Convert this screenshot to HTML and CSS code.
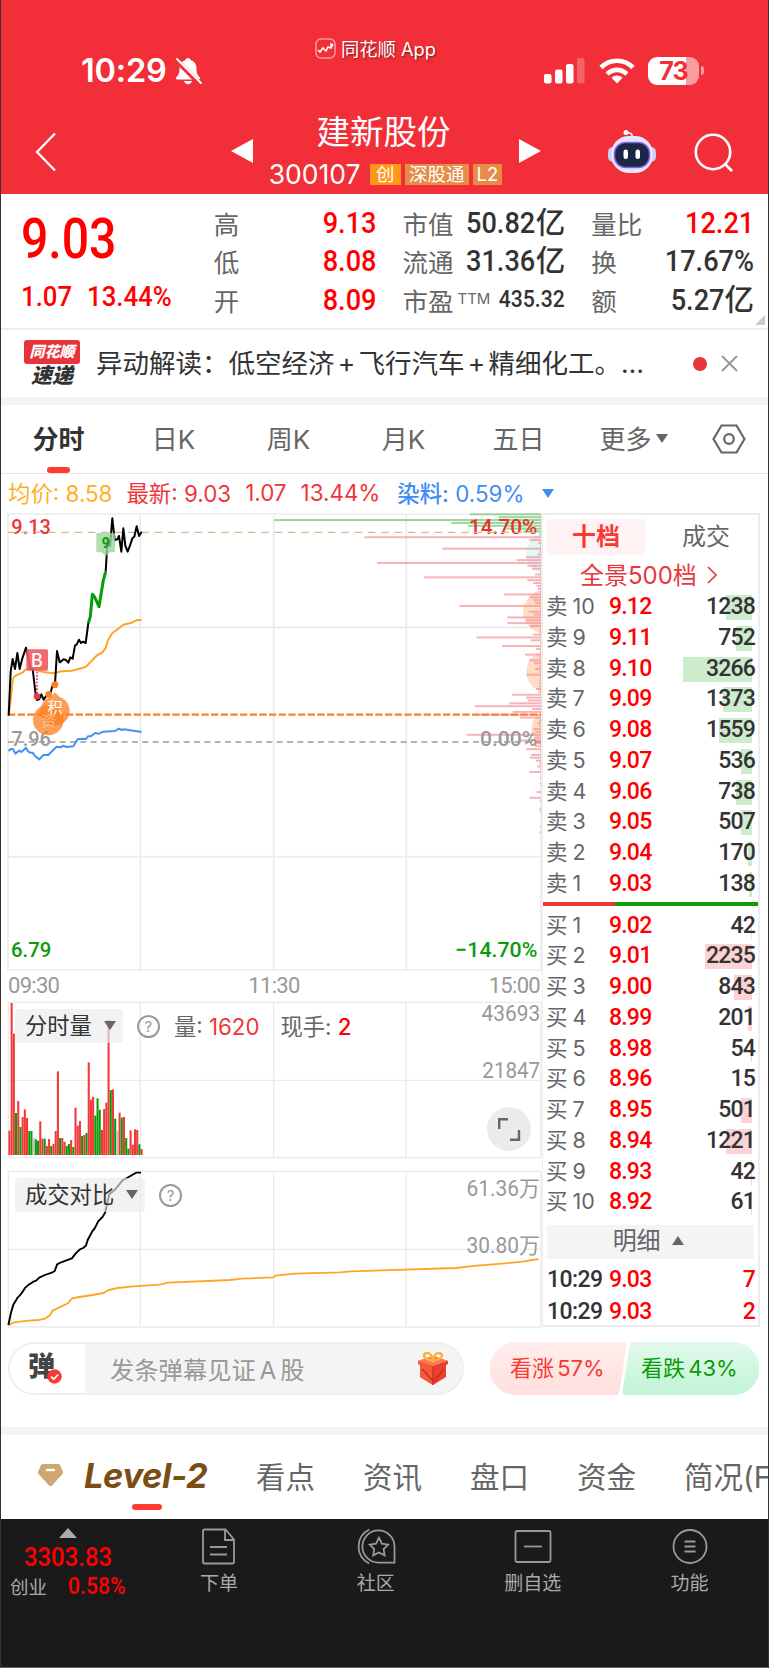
FILE: index.html
```html
<!DOCTYPE html>
<html lang="zh-CN">
<head>
  <meta charset="UTF-8">
  <meta name="viewport" content="width=device-width, initial-scale=1.0">
  <title>建新股份 300107</title>
  <link rel="stylesheet" href="styles.css">
</head>
<body>
<div class="phone">

  <!-- 顶部 -->
  <header class="header">
    <div class="status">
      <span class="clock">10:29</span>
      <svg class="bell" width="27" height="28" viewBox="0 0 27 28">
        <path fill="#fff" d="M13 1c1.500 0 2.500 1 2.800 2.300C20 4.500 21.500 8 21.500 12c0 5 1.500 6.500 3 8 1 1.200.5 2.500-1 2.500h-21c-1.500 0-2-1.300-1-2.500 1.500-1.500 3-3 3-8 0-4 1.500-7.500 5.700-8.700C10.500 2 11.500 1 13 1zM9 24h8c-.5 2-2 3.200-4 3.200S9.500 26 9 24z"/>
        <path d="M1 3l24 24" stroke="#f22f38" stroke-width="5"/>
        <path d="M2 2l24 24" stroke="#fff" stroke-width="2" stroke-linecap="round"/>
      </svg>
      <div class="status-right">
        <svg width="41" height="26" viewBox="0 0 41 26" fill="#fff">
          <rect x="0" y="16" width="7.500" height="9.500" rx="2"/>
          <rect x="11" y="11.500" width="7.500" height="14" rx="2"/>
          <rect x="22" y="6" width="7.500" height="19.500" rx="2"/>
          <rect x="33" y="0" width="7.500" height="25.500" rx="2" opacity=".25"/>
        </svg>
        <svg class="wifi" width="36" height="26" viewBox="0 0 36 26" fill="none" stroke="#fff" stroke-width="4.600">
          <path d="M2 9.500C11 .5 25 .5 34 9.500"/>
          <path d="M8 16c6-5.500 14-5.500 20 0"/>
          <path d="M12.500 19.800c3.500-3 7.500-3 11 0L18 25.500z" fill="#fff" stroke="none"/>
        </svg>
        <div class="battery">73</div>
        <i class="battery-tip"></i>
      </div>
      <div class="app-name">
        <svg width="21" height="21" viewBox="0 0 21 21" fill="none" stroke="#fff">
          <rect x="1" y="1" width="19" height="19" rx="5" stroke="#ff9a9a" stroke-width="1.500"/>
          <path d="M3 12l2 2 3-4 3 3 2-4 3 1 2-4M16 5v5" stroke-width="1.600"/>
        </svg>
        <span>同花顺 App</span>
      </div>
    </div>
    <div class="nav">
      <svg class="back" width="22" height="40" viewBox="0 0 22 40"><path d="M20 1.500L2 20l18 18.500" fill="none" stroke="#fff" stroke-width="2.300"/></svg>
      <i class="prev"></i>
      <div class="stock">
        <h1>建新股份</h1>
        <div class="code">300107 <b class="hot">创</b><b>深股通</b><b>L2</b></div>
      </div>
      <i class="next"></i>
      <svg class="robot" width="48" height="43" viewBox="0 0 48 43">
        <path d="M24 8c1-4-1-5-5-5.500" fill="none" stroke="#e6e3ff" stroke-width="2"/>
        <circle cx="18" cy="2.500" r="2.500" fill="#fff"/>
        <rect x="0" y="17" width="10" height="15" rx="5" fill="#c9cbf5"/>
        <rect x="38" y="17" width="10" height="15" rx="5" fill="#c9cbf5"/>
        <rect x="3" y="6" width="42" height="37" rx="18" fill="#e4e7fb"/>
        <rect x="6.500" y="12.500" width="35" height="25" rx="11" fill="#1c2746" stroke="#8660ea" stroke-width="1.500"/>
        <rect x="15.500" y="19.500" width="4.500" height="9.500" rx="2.200" fill="#fff"/>
        <rect x="27.500" y="19.500" width="4.500" height="9.500" rx="2.200" fill="#fff"/>
      </svg>
      <svg class="search" width="40" height="40" viewBox="0 0 40 40" fill="none" stroke="#fff" stroke-width="2.600"><circle cx="19" cy="19" r="17.200"/><path d="M31 31l7 7"/></svg>
    </div>
  </header>

  <!-- 报价 -->
  <section class="quote">
    <div class="last">
      <div class="price din">9.03</div>
      <div class="change"><span class="din">1.07</span><span class="din">13.44%</span></div>
    </div>
    <dl>
      <dt>高</dt><dd class="red"><span class="din">9.13</span></dd>
      <dt>低</dt><dd class="red"><span class="din">8.08</span></dd>
      <dt>开</dt><dd class="red"><span class="din">8.09</span></dd>
    </dl>
    <dl>
      <dt>市值</dt><dd><span class="din">50.82</span>亿</dd>
      <dt>流通</dt><dd><span class="din">31.36</span>亿</dd>
      <dt>市盈<sup>TTM</sup></dt><dd class="small"><span class="din">435.32</span></dd>
    </dl>
    <dl>
      <dt>量比</dt><dd class="red"><span class="din">12.21</span></dd>
      <dt>换</dt><dd><span class="din">17.67%</span></dd>
      <dt>额</dt><dd><span class="din">5.27</span>亿</dd>
    </dl>
    <i class="corner"></i>
  </section>

  <!-- 快讯 -->
  <section class="news">
    <div class="news-logo"><b>同花顺</b><span>速递</span></div>
    <p>异动解读：低空经济<em>+</em>飞行汽车<em>+</em>精细化工。…</p>
    <i class="dot"></i>
    <svg width="17" height="17" viewBox="0 0 17 17" stroke="#999" stroke-width="2"><path d="M1 1l15 15M16 1L1 16"/></svg>
  </section>

  <nav class="periods">
    <span class="active">分时</span>
    <span>日K</span>
    <span>周K</span>
    <span>月K</span>
    <span>五日</span>
    <span>更多<i class="down"></i></span>
    <svg width="34" height="30" viewBox="0 0 34 30" fill="none" stroke="#666" stroke-width="2.200"><path d="M9.500 1.500h15L32.500 15l-8 13.500h-15L1.500 15z"/><circle cx="17" cy="15" r="4.800"/></svg>
  </nav>

  <div class="legend">
    <span class="avg">均价: 8.58</span>
    <span class="now">最新: 9.03</span>
    <span class="now">1.07</span>
    <span class="now">13.44%</span>
    <span class="dye"><b>染料:</b> 0.59%</span>
    <i class="down"></i>
  </div>

  <main class="market">
    <div class="charts">
      <!-- 分时走势 -->
      <svg class="trend" width="536" height="458" viewBox="21 24 1608 1374">
        <g stroke="#ebebeb" stroke-width="5" fill="none">
          <path d="M24 27H1623V1395H24z"/>
          <path d="M24 367H1623M24 1055H1623M421 27V1395M821 27V1395M1219 27V1395"/>
        </g>
        <g opacity=".55">
          <path d="M1623 87a60 60 0 0 0 0 116z" fill="#c9f1f6"/>
          <path d="M1623 256a65 65 0 0 0 0 128z" fill="#ffc496"/>
          <path d="M1623 440a63 63 0 0 0 0 120z" fill="#ffc496"/>
          <path d="M1623 623a56 56 0 0 0 0 98z" fill="#ffc496"/>
        </g>
        <g id="chips"></g>
        <g font-family="Roboto" font-weight="500" font-size="63">
          <text x="34" y="88" fill="#f0323a" textLength="119" lengthAdjust="spacingAndGlyphs">9.13</text>
          <text x="1407" y="88" fill="#e8322c" textLength="205" lengthAdjust="spacingAndGlyphs">14.70%</text>
          <text x="34" y="722" fill="#999" textLength="119" lengthAdjust="spacingAndGlyphs">7.96</text>
          <text x="1440" y="722" fill="#999" textLength="172" lengthAdjust="spacingAndGlyphs">0.00%</text>
          <text x="33" y="1355" fill="#0a9b0a" textLength="121" lengthAdjust="spacingAndGlyphs">6.79</text>
          <text x="1366" y="1355" fill="#0a9b0a" textLength="246" lengthAdjust="spacingAndGlyphs">−14.70%</text>
        </g>
        <path d="M24 82H1623" stroke="#dcb98a" stroke-width="4" stroke-dasharray="22 18"/>
        <path d="M24 711H1623" stroke="#9a9a9a" stroke-width="5" stroke-dasharray="18 13"/>
        <path d="M24 629H1623" stroke="#f5842a" stroke-width="7" stroke-dasharray="22 7"/>
        <g fill="none" stroke-width="6" stroke-linejoin="round">
          <polyline stroke="#ffa526" points="26,632 35,560 38,522 45,513 67,503 78,493 105,494 130,501 160,505 185,499 215,497 257,486 292,450 305,444 317,430 324,405 337,384 350,375 370,359 395,353 412,345 425,345"/>
          <polyline stroke="#4490f5" points="26,738 32,732 39,732 46,746 58,737 64,741 71,735 78,728 84,739 91,743 98,743 105,753 118,763 130,750 145,750 170,725 183,727 190,722 200,726 220,724 233,703 245,701 258,702 264,694 272,694 285,684 297,686 310,680 345,678 357,671 365,675 372,673 400,677 425,681"/>
          <polyline stroke="#000" points="26,632 32,500 38,462 45,492 52,444 59,492 67,460 78,428 92,492 98,492 106,560 111,585 118,582 124,568 131,584 138,574 146,566 152,562 158,540 165,538 171,438 179,472 191,463 198,465 205,473 211,457 218,461 225,421 230,419 237,404 243,414 249,410 257,414 265,354"/>
          <polyline stroke="#000" points="317,200 323,100 330,123 337,40 344,105 352,103 357,93 364,140 370,70 376,122 383,140 390,122 397,100 403,95 410,64 417,93 425,80"/>
          <polyline stroke="#0a9b0a" stroke-width="9" points="265,354 271,335 277,268 284,276 297,305 310,226 317,200"/>
        </g>
        <!-- 买卖标记 -->
        <path d="M111 500V570" stroke="#e8384a" stroke-width="5" stroke-dasharray="5 5"/>
        <rect x="79" y="433" width="65" height="64" rx="5" fill="#ef5a62" opacity=".9"/>
        <text x="111" y="486" font-family="Inter" font-weight="500" font-size="54" fill="#fff" text-anchor="middle">B</text>
        <circle cx="111" cy="574" r="10" fill="#e8384a"/>
        <path d="M293 84h48q4 0 4 4v50q0 4-4 4h-12l-12 12-12-12h-12q-4 0-4-4V88q0-4 4-4z" fill="#9ad79a" opacity=".8"/>
        <text x="317" y="129" font-family="Roboto" font-weight="700" font-size="42" fill="#0a9b0a" text-anchor="middle">9</text>
        <g fill="#ff7f1e">
          <circle cx="165" cy="539" r="10"/>
          <circle cx="146" cy="568" r="10"/>
          <circle cx="145" cy="645" r="46" opacity=".75"/>
          <path d="M165 562l14 14a44 44 0 1 1-28 0z" opacity=".75"/>
        </g>
        <g font-family="Noto Sans CJK SC" font-size="46" fill="#fff" text-anchor="middle">
          <text x="145" y="662" opacity=".4">资</text>
          <text x="165" y="625">积</text>
        </g>
      </svg>

      <div class="times"><span>09:30</span><span>11:30</span><span>15:00</span></div>

      <!-- 分时量 -->
      <div class="sub">
        <svg width="536" height="158" viewBox="20 213 1528 474" preserveAspectRatio="none">
          <path d="M24 217H1542V683H24zM24 451H1542M400 217V683M780 217V683M1158 217V683" fill="none" stroke="#ebebeb" stroke-width="4"/>
          <g id="volume"></g>
          <g font-family="Roboto" font-size="64" fill="#999">
            <text x="1373" y="272" textLength="167" lengthAdjust="spacingAndGlyphs">43693</text>
            <text x="1375" y="444" textLength="165" lengthAdjust="spacingAndGlyphs">21847</text>
          </g>
        </svg>
        <div class="sub-head">
          <span class="select">分时量<i class="down"></i></span>
          <span class="help">?</span>
          <span class="info">量: <b>1620</b></span>
          <span class="info">现手: <b class="strong">2</b></span>
        </div>
        <div class="expand">
          <svg width="22" height="23" viewBox="0 0 22 23" fill="none" stroke="#666" stroke-width="2.400"><path d="M1.200 11V1.200H10M21 12v9.800h-9"/></svg>
        </div>
      </div>

      <!-- 成交对比 -->
      <div class="sub compare">
        <svg width="536" height="158" viewBox="20 58 1528 474" preserveAspectRatio="none">
          <path d="M24 62H1542V529H24zM24 296H1542M400 62V529M780 62V529M1158 62V529" fill="none" stroke="#ebebeb" stroke-width="4"/>
          <g fill="none" stroke-width="5.500" stroke-linejoin="round">
            <polyline stroke="#ffa526" points="24,523 40,515 80,510 110,508 128,504 143,493 150,480 170,470 195,457 204,444 225,439 265,433 295,427 310,418 335,412 380,407 455,402 480,396 655,388 690,384 780,380 785,375 840,369 970,365 1000,362 1300,352 1360,345 1440,338 1490,333 1535,325"/>
            <polyline stroke="#000" points="24,523 31,488 38,462 44,452 50,441 56,435 62,427 72,411 83,401 90,397 95,393 103,390 112,381 128,373 150,365 156,361 163,341 170,337 180,333 205,323 216,308 228,296 237,292 245,285 250,268 263,242 270,233 280,212 293,198 300,185 305,160 312,130 325,120 335,108 350,88 362,82 388,66 402,66"/>
          </g>
          <g font-family="Roboto, 'Noto Sans CJK SC'" font-size="64" fill="#999">
            <text x="1330" y="135" textLength="209" lengthAdjust="spacingAndGlyphs">61.36万</text>
            <text x="1330" y="308" textLength="209" lengthAdjust="spacingAndGlyphs">30.80万</text>
          </g>
        </svg>
        <div class="sub-head">
          <span class="select">成交对比<i class="down"></i></span>
          <span class="help">?</span>
        </div>
      </div>
    </div>

    <!-- 盘口 -->
    <aside class="book">
      <div class="book-tabs"><span class="active">十档</span><span>成交</span></div>
      <div class="all">全景500档 <svg width="10" height="18" viewBox="0 0 10 18"><path d="M1 1l8 8-8 8" fill="none" stroke="#e8383c" stroke-width="1.600"/></svg></div>
      <div id="sell"></div>
      <div class="ratio"></div>
      <div id="buy"></div>
      <div class="detail">明细 <i class="up"></i></div>
      <div class="trade"><span>10:29</span><b>9.03</b><b class="num">7</b></div>
      <div class="trade"><span>10:29</span><b>9.03</b><b class="num">2</b></div>
    </aside>
  </main>

  <!-- 弹幕 -->
  <section class="danmu">
    <div class="input">
      <div class="toggle">弹<svg width="15" height="15" viewBox="0 0 15 15"><circle cx="7.500" cy="7.500" r="7.200" fill="#fa3932"/><path d="M4 7.500l2.700 2.700 4.500-4.700" fill="none" stroke="#fff" stroke-width="1.700"/></svg></div>
      <div class="hint">发条弹幕见证 A 股</div>
      <svg class="gift" width="32" height="33" viewBox="0 0 32 33">
        <path d="M1 9l15-5 15 5v3l-2 1v12l-13 8-13-8V13l-2-1z" fill="#e8402c"/>
        <path d="M1 9l15 5v19L3 25V13l-2-1z" fill="#f25b3d"/>
        <path d="M1 9l15-5 15 5-15 5z" fill="#fa7a58"/>
        <path d="M5 17l11 12M16 15v18M27 17L17 29" stroke="#c92a1c" stroke-width="1.200"/>
        <path d="M16 9c-3-1-9-2-9-5s4-4 6-2 3 5 3 7zm0 0c3-1 9-2 9-5s-4-4-6-2-3 5-3 7z" fill="none" stroke="#f6b13a" stroke-width="2.400"/>
      </svg>
    </div>
    <div class="vote">
      <svg width="269" height="53" viewBox="0 0 269 53">
        <defs>
          <linearGradient id="up" x2="0" y2="1"><stop stop-color="#ffeeed"/><stop offset="1" stop-color="#ffdfdd"/></linearGradient>
          <linearGradient id="dn" x2="0" y2="1"><stop stop-color="#e2faec"/><stop offset="1" stop-color="#c0f3d5"/></linearGradient>
        </defs>
        <path d="M26 0h107q4 0 3.500 4l-7 45q-.5 4-4.500 4H26a26 26 0 0 1 0-53z" fill="url(#up)"/>
        <path d="M144 0h99a26 26 0 0 1 0 53H136q-4 0-3.500-4l7-45q.5-4 4.500-4z" fill="url(#dn)"/>
      </svg>
      <div class="vote-text"><span>看涨 57%</span><span class="fall">看跌 43%</span></div>
    </div>
  </section>

  <nav class="tabs">
    <svg width="27" height="24" viewBox="0 0 27 24"><path d="M6 1h15q1 0 2 1l3 7q.5 1-.5 2L15 22.500q-1.500 1.500-3 0L1.500 11Q.5 10 1 9l3-7q1-1 2-1z" fill="#cfa671"/><path d="M9 7h9" stroke="#fff" stroke-width="2.400"/></svg>
    <span class="level">Level-2</span>
    <span>看点</span><span>资讯</span><span>盘口</span><span>资金</span><span>简况(F10)</span>
  </nav>

  <footer class="bottom">
    <div class="index">
      <i class="up"></i>
      <div class="point din">3303.83</div>
      <div class="index-row">创业<span class="din">0.58%</span></div>
    </div>
    <div class="item">
      <svg width="36" height="36" viewBox="0 0 36 36"><path d="M3.500 1h21l8.500 10v22.500q0 1.500-1.500 1.500h-28Q2 35 2 33.500v-31Q2 1 3.500 1zM24 1v10.500h9M9 18.500h17M9 26h17"/></svg>
      下单
    </div>
    <div class="item">
      <svg width="40" height="38" viewBox="0 0 40 38"><path d="M39 35.500H23a16.500 16.500 0 1 1 16-16.500zM13 1.500C-1.500 9 -1.500 29 13 36.500"/><path d="M23 10l3 6 6.500 1-4.700 4.600 1.100 6.500-5.900-3-5.900 3 1.100-6.500-4.700-4.600 6.500-1z"/></svg>
      社区
    </div>
    <div class="item">
      <svg width="38" height="36" viewBox="0 0 38 36"><rect x="1.500" y="2.500" width="35" height="31" rx="1.500"/><path d="M10 18h18"/></svg>
      删自选
    </div>
    <div class="item">
      <svg width="36" height="36" viewBox="0 0 36 36"><circle cx="18" cy="18" r="16.500"/><path d="M12.500 13h11M12.500 18h11M12.500 23h11"/></svg>
      功能
    </div>
  </footer>
</div>

<script>
  // 十档盘口 [价格, 数量]
  const sells = [['9.12', 1238], ['9.11', 752], ['9.10', 3266], ['9.09', 1373], ['9.08', 1559], ['9.07', 536], ['9.06', 738], ['9.05', 507], ['9.04', 170], ['9.03', 138]];
  const buys = [['9.02', 42], ['9.01', 2235], ['9.00', 843], ['8.99', 201], ['8.98', 54], ['8.96', 15], ['8.95', 501], ['8.94', 1221], ['8.93', 42], ['8.92', 61]];

  function row(name, item) {
    const width = Math.round(item[1] * 69 / 3266);
    return `<div class="row"><span>${name}</span><b>${item[0]}</b><b class="num"><i style="width:${width}px"></i><em>${item[1]}</em></b></div>`;
  }
  document.getElementById('sell').innerHTML = sells.map((s, i) => row('卖 ' + (10 - i), s)).join('');
  document.getElementById('buy').innerHTML = buys.map((b, i) => row('买 ' + (i + 1), b)).join('');

  // 筹码分布
  const chips = [213, 128, 800, 269, 219, 103, 53, 6, 530, 35, 8, 3, 296, 5, 10, 45, 73, 492, 41, 27, 3, 18, 351, 41, 24, 13, 10, 3, 110, 33, 23, 18, 245, 3, 37, 23, 101, 45, 101, 33, 3, 5, 23, 193, 31, 3, 117, 15, 3, 48, 5, 36, 21, 5, 18, 5, 43, 3, 5, 5, 6, 15, 8, 87, 45, 40, 95, 198, 27, 85, 193, 63, 6, 11, 5, 23, 18, 223, 18, 65, 23, 18, 45, 3, 30, 34, 15, 5, 11, 3, 35, 0, 3, 0, 3, 0, 0, 13, 0, 34, 3, 0, 0, 5, 2, 0, 0, 0, 0, 2, 0, 4];
  document.getElementById('chips').innerHTML = chips.map((w, i) =>
    `<rect x="${1623 - w}" y="${25 + i * 8.59}" width="${w}" height="6" fill="${i < 7 ? '#8fd08f' : '#f58a90'}" opacity="${i < 7 ? 0.9 : 0.65}"/>`).join('');

  // 成交量
  const vol = 'r73 r456 r364 g126 r162 g84 r114 r137 r111 g72 g72 x50 g47 g43 r101 r49 g49 r27 r48 g27 r33 r72 r251 g51 r51 r40 g27 g33 r45 g24 r142 r88 r102 g57 r60 g66 r278 r166 r175 g118 g170 g136 r75 r138 r157 r406 g195 r197 g109 x73 r127 g112 r114 g51 g19 r74 r31 r77 r75 g32 r18';
  const colors = { r: '#f03a3a', g: '#0a9b0a', x: '#c0c0c0' };
  document.getElementById('volume').innerHTML = vol.split(' ').map((v, i) => {
    const h = +v.slice(1);
    return `<rect x="${24 + i * 6.28}" y="${675 - h}" width="5.900" height="${h}" fill="${colors[v[0]]}"/>`;
  }).join('');
</script>
</body>
</html>
```
FILE: styles.css
```css
* {
  box-sizing: border-box;
}
body {
  margin: 0;
  background: #fff;
  color: #333;
  font-family: Inter, "Noto Sans CJK SC", sans-serif;
}
.phone {
  width: 769px;
  height: 1668px;
  border: 1px solid #333;
  border-top: 0;
  border-bottom-color: #666;
  display: flex;
  flex-direction: column;
  overflow: hidden;
}
i, em {
  font-style: normal;
}
.din {
  display: inline-block;
  font-family: Roboto, "Noto Sans CJK SC", sans-serif;
  font-weight: 500;
  transform: scaleX(.92);
  transform-origin: right center;
}
.red {
  color: #f00;
}
.down, .up {
  display: inline-block;
  border: 6px solid transparent;
  border-top: 9px solid #666;
  border-bottom: 0;
}
.up {
  border-top: 0;
  border-bottom: 9px solid #666;
}

/* 顶部 */
.header {
  flex: none;
  height: 194px;
  background: #f22f38;
  color: #fff;
}
.status {
  position: relative;
  height: 101px;
  padding: 40px 64px 0 80px;
  display: flex;
  align-items: center;
}
.clock {
  width: 94px;
  font-size: 32.500px;
  font-weight: 600;
  letter-spacing: -.2px;
}
.status-right {
  margin-left: auto;
  display: flex;
  align-items: center;
}
.wifi {
  margin: 0 13px 0 14px;
}
.battery {
  width: 51px;
  height: 28px;
  border-radius: 9px;
  background: linear-gradient(90deg, #fff 38px, #fa9da2 38px);
  color: #f22f38;
  font-size: 25px;
  font-weight: 700;
  line-height: 28px;
  text-align: center;
  letter-spacing: -1px;
}
.battery-tip {
  width: 3px;
  height: 9px;
  margin-left: 2px;
  border-radius: 0 3px 3px 0;
  background: #fa9da2;
}
.app-name {
  position: absolute;
  left: 314px;
  top: 35px;
  display: flex;
  align-items: center;
  gap: 5px;
  font-size: 18.300px;
  line-height: 26px;
  text-shadow: 1px 1px 2px rgba(0, 0, 0, .5);
}
.app-name span {
  padding-top: 1px;
}
.nav {
  display: flex;
  height: 93px;
  align-items: flex-start;
}
.back {
  margin: 31px 0 0 34px;
}
.prev, .next {
  margin-top: 38px;
  border: 12px solid transparent;
}
.prev {
  margin-left: 174px;
  border-left: 0;
  border-right: 22px solid #fff;
}
.next {
  border-right: 0;
  border-left: 22px solid #fff;
}
.stock {
  width: 266px;
  padding-right: 5px;
  text-align: center;
}
.stock h1 {
  margin: 10px 0 0;
  font-size: 33.500px;
  font-weight: 400;
  line-height: 42px;
}
.code {
  display: flex;
  align-items: center;
  justify-content: center;
  gap: 4px;
  height: 42px;
  margin-right: -4px;
  font-size: 26.500px;
}
.code b {
  padding: 0 4px;
  background: #e58d48;
  font-size: 18.500px;
  font-weight: 400;
  line-height: 21px;
}
.code .hot {
  margin-left: 5px;
  padding: 0 6.500px;
  background: #ff9717;
}
.robot {
  margin: 29px 0 0 67px;
}
.search {
  margin: 32px 0 0 38px;
}

/* 报价 */
.quote {
  position: relative;
  flex: none;
  height: 136px;
  padding: 9px 14px 0 20px;
  display: flex;
  border-bottom: 2px solid #ececec;
}
.last {
  width: 193px;
  color: #f00;
}
.price {
  margin-top: 6px;
  font-size: 56px;
  line-height: 60px;
  transform: scaleX(.86);
  transform-origin: left center;
}
.change {
  display: flex;
  gap: 10px;
  margin-top: 10px;
  font-size: 28px;
  line-height: 36px;
}
.change .din {
  transform-origin: left center;
}
.quote dl {
  margin: 0 26px 0 0;
  width: 163px;
  display: grid;
  grid-template-columns: 50px 1fr;
  grid-auto-rows: 38.500px;
  align-items: center;
}
.quote dl:last-of-type {
  margin-right: 0;
}
.quote dt {
  font-size: 25.500px;
  color: #666;
  white-space: nowrap;
}
.quote dt sup {
  margin-left: 4px;
  font-size: 15px;
  line-height: 1;
  vertical-align: 7px;
}
.quote dd {
  margin: 0;
  font-size: 29.500px;
  font-weight: 500;
  line-height: 38px;
  text-align: right;
  white-space: nowrap;
}
.quote .small {
  font-size: 23px;
}
.corner {
  position: absolute;
  right: 3px;
  bottom: 3px;
  border-left: 10px solid transparent;
  border-bottom: 10px solid #ccc;
}

/* 快讯 */
.news {
  flex: none;
  height: 75px;
  padding: 0 30px 0 23px;
  display: flex;
  align-items: center;
  border-bottom: 8px solid #f4f4f4;
}
.news-logo {
  width: 56px;
  margin-right: 16px;
  text-align: center;
  font-weight: 900;
  font-style: italic;
}
.news-logo b {
  display: block;
  border-radius: 3px;
  background: #e8333a;
  color: #fff;
  font-size: 15px;
  font-weight: 900;
  line-height: 24px;
}
.news-logo span {
  display: block;
  font-size: 21px;
  line-height: 23px;
}
.news p {
  width: 598px;
  margin: -4px 0 0;
  font-size: 26.500px;
  white-space: nowrap;
}
.news em {
  display: inline-block;
  width: 24px;
  text-align: center;
}
.dot {
  width: 14px;
  height: 14px;
  border-radius: 50%;
  background: #e8333a;
  margin-right: 14px;
}
.news svg {
  flex: none;
}

.periods {
  flex: none;
  height: 69px;
  display: flex;
  align-items: center;
  border-bottom: 1px solid #e6e6e6;
  font-size: 26px;
  color: #666;
}
.periods span {
  position: relative;
  top: -2px;
  width: 115px;
  text-align: center;
}
.periods .active {
  font-weight: 700;
  color: #333;
}
.periods .active::after {
  content: "";
  position: absolute;
  left: 46px;
  bottom: -17px;
  width: 23px;
  height: 6px;
  border-radius: 3px;
  background: #ff3b30;
}
.periods .down {
  margin-left: 4px;
  vertical-align: 6px;
}
.periods svg {
  margin-left: 21px;
}

.legend {
  flex: none;
  height: 39px;
  padding: 0 0 3px 7px;
  display: flex;
  align-items: center;
  gap: 14px;
  font-size: 22.400px;
}
.legend b {
  font-weight: 500;
}
.avg {
  color: #ffb01f;
}
.now {
  color: #f0363a;
}
.dye {
  margin-left: 3px;
  color: #3f8df5;
}
.legend .down {
  margin: 2px 0 0 4px;
  border-top-color: #3f8df5;
}

/* 图表 */
.market {
  flex: none;
  display: flex;
  height: 815px;
  padding: 0 8px 0 6px;
}
.charts {
  width: 535px;
}
.charts svg {
  display: block;
  overflow: visible;
}
.times {
  display: flex;
  justify-content: space-between;
  height: 30px;
  padding: 0 2px 0 1px;
  font-family: Roboto, sans-serif;
  font-size: 22px;
  line-height: 29px;
  color: #999;
  letter-spacing: -.7px;
}
.sub {
  position: relative;
  height: 158px;
}
.compare {
  margin-top: 11px;
}
.sub-head {
  position: absolute;
  left: 8px;
  top: 8px;
  display: flex;
  align-items: center;
  height: 34px;
  color: #666;
  font-size: 22.300px;
}
.select {
  padding: 0 7px 0 10px;
  border-radius: 4px;
  background: rgba(235, 235, 235, .65);
  color: #333;
  line-height: 34px;
}
.select .down {
  margin-left: 12px;
  vertical-align: 4px;
}
.help {
  width: 23px;
  height: 23px;
  margin: 0 14px 0 14px;
  border: 2px solid #999;
  border-radius: 50%;
  color: #999;
  font-size: 15px;
  line-height: 19px;
  text-align: center;
}
.info {
  margin: -2px 21px 0 0;
}
.info b {
  color: #f0363a;
  font-weight: 400;
}
.info .strong {
  color: #f00;
  font-weight: 500;
}
.expand {
  position: absolute;
  right: 11px;
  top: 106px;
  width: 44px;
  height: 44px;
  border-radius: 50%;
  background: #ebebeb;
  display: flex;
  align-items: center;
  justify-content: center;
}

/* 盘口 */
.book {
  width: 219px;
  height: 814px;
  border: 2px solid #ededed;
  border-left-width: 1px;
  padding: 4px 3px 0 4px;
}
.book-tabs {
  display: flex;
  font-size: 24px;
  line-height: 36px;
  text-align: center;
  color: #666;
}
.book-tabs span {
  width: 98px;
  margin-right: 12px;
}
.book-tabs span + span {
  margin: 0;
}
.book-tabs .active {
  border-radius: 4px;
  background: #fff2f2;
  color: #f83a34;
  font-weight: 700;
}
.all {
  padding-left: 33px;
  height: 37px;
  color: #e8383c;
  font-size: 24px;
  line-height: 41px;
}
.all svg {
  display: inline;
  margin-left: 3px;
}
.row {
  position: relative;
  display: flex;
  height: 30.750px;
  line-height: 30.750px;
  font-size: 22px;
  color: #666;
}
.row span {
  width: 63px;
  margin-left: -1px;
  white-space: nowrap;
  word-spacing: -1px;
  font-size: 21.500px;
  line-height: 29px;
}
.row b, .trade b {
  width: 60px;
  color: #f00;
  font-family: Roboto, sans-serif;
  font-size: 23px;
  font-weight: 500;
  letter-spacing: -.8px;
}
.row .num, .trade .num {
  width: auto;
  margin-left: auto;
}
.row .num {
  color: #333;
}
.row .num i {
  position: absolute;
  right: 3px;
  top: 3px;
  height: 25px;
  background: #cdebcd;
}
#buy .num i {
  background: #fbd3d5;
}
.row .num em {
  position: relative;
}
.ratio {
  height: 4px;
  margin: 2px -3px 5px -4px;
  background: linear-gradient(90deg, #f03a3a 33.300%, #0a9b0a 33.300%);
}
.detail {
  height: 34px;
  margin: 7px 1px 5px 0;
  padding-right: 4px;
  background: #f4f4f4;
  color: #666;
  font-size: 24px;
  line-height: 32px;
  text-align: center;
}
.detail .up {
  margin-left: 5px;
  vertical-align: 4px;
}
.trade {
  display: flex;
  height: 32px;
  line-height: 32px;
  color: #333;
}
.trade span {
  width: 62px;
  font-family: Roboto, sans-serif;
  font-size: 23px;
  font-weight: 500;
  letter-spacing: -.6px;
}

/* 弹幕 */
.danmu {
  flex: none;
  height: 107px;
  padding: 14px 9px 0 7px;
  display: flex;
  justify-content: space-between;
  border-bottom: 8px solid #f4f4f4;
}
.input {
  width: 456px;
  height: 53px;
  border: 2px solid #efefef;
  border-radius: 27px;
  background: #f4f4f4;
  display: flex;
  align-items: center;
  overflow: hidden;
}
.toggle {
  position: relative;
  width: 75px;
  height: 49px;
  padding-left: 18px;
  background: #fff;
  color: #444;
  font-size: 27px;
  font-weight: 900;
  line-height: 45px;
}
.toggle svg {
  position: absolute;
  left: 37px;
  top: 25px;
}
.hint {
  margin-top: -1px;
  padding-left: 25px;
  color: #999;
  font-size: 24.300px;
  word-spacing: -3px;
}
.gift {
  margin: 0 13px 0 auto;
}
.vote {
  position: relative;
}
.vote-text {
  position: absolute;
  left: 0;
  top: 0;
  display: flex;
  width: 269px;
  color: #fa3932;
  font-size: 22px;
  line-height: 52px;
}
.vote-text span {
  padding-left: 20px;
  width: 131px;
  white-space: nowrap;
  word-spacing: -3px;
}
.vote-text .fall {
  color: #0a9b0a;
}

.tabs {
  flex: none;
  height: 84px;
  padding: 0 0 4px 36px;
  display: flex;
  align-items: center;
  overflow: hidden;
  color: #666;
  font-size: 29.500px;
  white-space: nowrap;
}
.tabs svg {
  flex: none;
}
.tabs span {
  margin-right: 48px;
}
.tabs .level {
  position: relative;
  flex: none;
  width: 126px;
  margin: 0 46px 0 20px;
  color: #7a4d12;
  font-size: 34.500px;
  font-weight: 700;
  font-style: italic;
  letter-spacing: -.4px;
}
.level::after {
  content: "";
  position: absolute;
  left: 48px;
  bottom: -14px;
  width: 30px;
  height: 6px;
  border-radius: 3px;
  background: #ff3b30;
}

/* 底部 */
.bottom {
  flex: 1;
  display: flex;
  background: #1a1a1a;
  color: #aaa;
}
.index {
  width: 140px;
  text-align: center;
}
.index .up {
  display: block;
  width: 18px;
  margin: 9px auto 0 58px;
  border-width: 0 9px 10px;
  border-bottom-color: #aaa;
}
.point {
  display: block;
  width: 134px;
  margin-top: 4px;
  color: #f00;
  font-size: 26px;
  line-height: 30px;
  transform-origin: center;
}
.index-row {
  display: flex;
  justify-content: space-between;
  padding: 0 15px 0 9px;
  font-size: 18.500px;
  line-height: 30px;
}
.index-row .din {
  color: #f00;
  font-size: 23px;
}
.item {
  width: 157.500px;
  padding-top: 9px;
  display: flex;
  flex-direction: column;
  align-items: center;
  font-size: 19px;
  line-height: 37px;
}
.item svg {
  height: 37px;
  fill: none;
  stroke: #999;
  stroke-width: 1.800;
}
```
